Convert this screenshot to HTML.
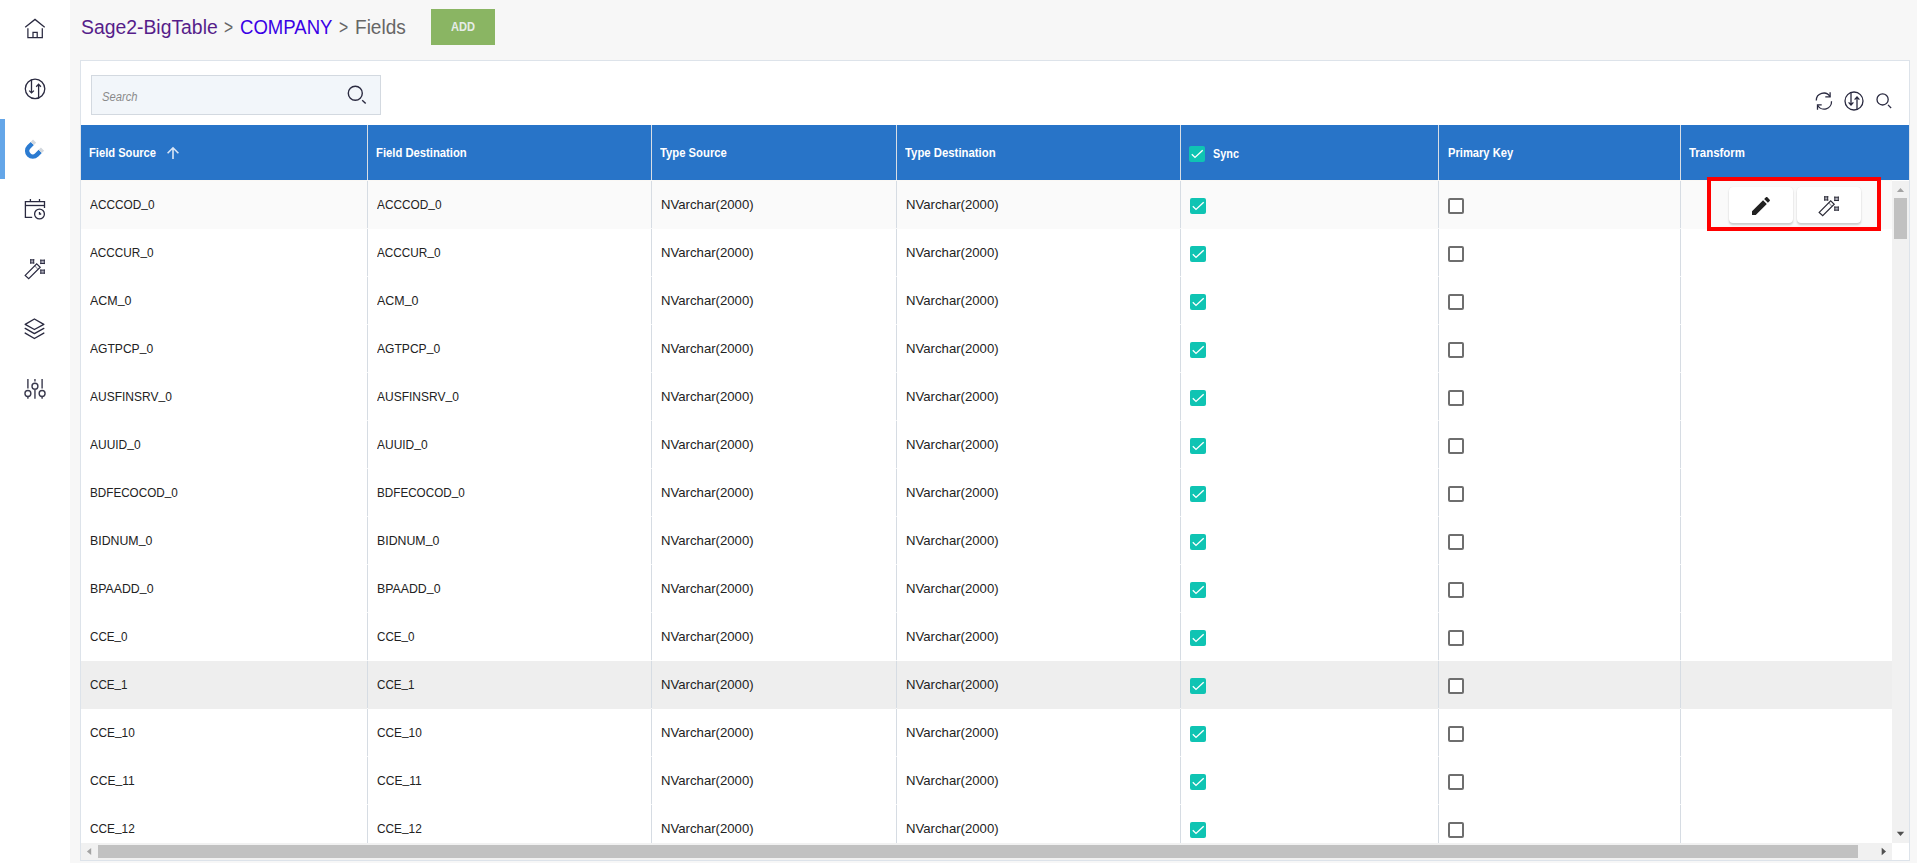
<!DOCTYPE html>
<html><head><meta charset="utf-8"><title>Fields</title>
<style>
*{box-sizing:border-box;margin:0;padding:0}
html,body{width:1917px;height:863px;overflow:hidden;background:#f7f7f7;font-family:"Liberation Sans",sans-serif}
body{position:relative}
.abs{position:absolute}
.t{position:absolute;white-space:nowrap;transform-origin:0 0}
#side{left:0;top:0;width:70px;height:863px;background:#fff}
#active{left:0;top:119px;width:5px;height:60px;background:#64a6e8}
#add{left:431px;top:9px;width:64px;height:36px;background:#8ab563}
#card{left:80px;top:60px;width:1830px;height:801px;background:#fff;border:1px solid #dde3ea}
#search{left:91px;top:75px;width:290px;height:40px;background:#f2f6fa;border:1px solid #d3d9e0}
#thead{left:81px;top:125px;width:1828px;height:55px;background:#2874c8}
.hline{top:125px;width:1px;height:55px;background:#d8dee5}
#hsep{left:81px;top:180px;width:1811px;height:1px;background:#faf8f5}
.bline{top:181px;width:1px;height:662px;background:#d6dce3}
.u{position:relative;top:-2px}
.gap{width:1px;height:1px;background:#f6f7f8}
.row{left:81px;width:1811px;height:48px}
.cbt{position:absolute;width:16px;height:16px;border-radius:2px;background:#0fc4b3}
.cbt svg{display:block}
.cbe{position:absolute;width:16px;height:16px;border-radius:2px;border:2px solid #6e6e6e;background:#fff}
#redbox{left:1707px;top:177px;width:174px;height:54px;border:4px solid #ff0000}
.tbtn{top:187px;width:64px;height:36px;background:#fff;border-radius:4px;box-shadow:0 2px 2px rgba(0,0,0,0.18),0 0 1px rgba(0,0,0,0.1)}
#vsb{left:1892px;top:181px;width:17px;height:662px;background:#f1f1f1}
#hsb{left:81px;top:843px;width:1811px;height:17px;background:#f1f1f1}
#corner{left:1892px;top:843px;width:17px;height:17px;background:#fff}
</style></head><body>
<div class="abs" id="side"></div>
<div class="abs" id="active"></div>
<svg class="abs" style="left:24px;top:18px" width="22" height="22" viewBox="0 0 22 22" fill="none" stroke="#2a2a40" stroke-width="1.25">
<path d="M1.2 9.2 L11 1.4 L20.7 9.2"/><path d="M3.9 10.3 V19.6 H18.3 V10.3"/><path d="M9 19.6 V14.4 H13.2 V19.6"/></svg>
<svg class="abs" style="left:24px;top:78px" width="22" height="22" viewBox="0 0 22 22" fill="none" stroke="#2a2a40" stroke-width="1.3">
<circle cx="11.05" cy="10.85" r="9.75"/><path d="M7.5 1.4 V14.9 M5.2 12.6 L7.5 14.9 L9.9 12.6"/><path d="M14.6 20.5 V6.4 M12.2 8.7 L14.6 6.3 L16.9 8.7"/></svg>
<svg class="abs" style="left:24px;top:138px" width="22" height="22" viewBox="0 0 22 22" fill="none" stroke-width="4.5">
<path d="M8.3 5.48 L4.84 8.94 A5.6 5.6 0 0 0 12.76 16.86 L16.22 13.4" stroke="#2b7bd1"/>
<path d="M8.3 5.48 L10.6 3.18 M16.22 13.4 L18.52 11.1" stroke="#d3d8de"/></svg>
<svg class="abs" style="left:24px;top:198px" width="22" height="22" viewBox="0 0 22 22" fill="none" stroke="#2a2a40" stroke-width="1.3">
<path d="M8.2 19.3 H1.4 V3.6 H20.5 V9.9"/><path d="M1.4 7.5 H20.5"/><path d="M6.4 1.1 V3.6 M15.5 1.1 V3.6"/><circle cx="15.5" cy="16" r="4.9"/><path d="M15.5 14 V16 H17.2"/></svg>
<svg class="abs" style="left:24px;top:258px" width="22" height="22" viewBox="0 0 22 22" fill="none" stroke="#2a2a40" stroke-width="1.2">
<path d="M1.2 17.4 L12.7 5.8 L16.2 9.3 L4.7 20.6 Z"/><path d="M10.9 7.9 L13.6 10.8" stroke-opacity="0.45"/>
<rect x="6.699999999999999" y="1.7999999999999998" width="3.000000000000001" height="3.1999999999999993" fill="#b0b0bc" stroke="none"/><path stroke-width="1" d="M6.699999999999999 1.2 V5.6 M9.700000000000001 1.2 V5.6 M6.1 1.7999999999999998 H10.3 M6.1 5.0 H10.3"/><rect x="16.8" y="2.2" width="3.499999999999999" height="3.3" fill="#b0b0bc" stroke="none"/><path stroke-width="1" d="M16.8 1.6 V6.1 M20.299999999999997 1.6 V6.1 M16.2 2.2 H20.9 M16.2 5.5 H20.9"/><rect x="16.8" y="12.1" width="3.499999999999999" height="3.1000000000000005" fill="#b0b0bc" stroke="none"/><path stroke-width="1" d="M16.8 11.5 V15.8 M20.299999999999997 11.5 V15.8 M16.2 12.1 H20.9 M16.2 15.200000000000001 H20.9"/></svg>
<svg class="abs" style="left:24px;top:318px" width="22" height="22" viewBox="0 0 22 22" fill="none" stroke="#2a2a40" stroke-width="1.4" stroke-linecap="round" stroke-linejoin="round">
<path d="M10.4 1 L19.8 6.4 L10.4 11.5 L1.2 6.4 Z"/><path d="M1.2 10.4 L10.4 15.6 L19.8 10.4"/><path d="M1.2 15.1 L10.4 20.5 L19.8 15.1"/></svg>
<svg class="abs" style="left:24px;top:378px" width="22" height="22" viewBox="0 0 22 22" fill="none" stroke="#3a3a4e" stroke-width="1.4">
<path d="M3.9 1 V10.4 M3.9 18.6 V20.7"/><circle cx="3.9" cy="15.5" r="2.95"/>
<path d="M10.95 1 V3.5 M10.95 11.3 V20.7"/><circle cx="10.95" cy="8.2" r="2.95"/>
<path d="M18.1 1 V10.4 M18.1 18.6 V20.7"/><circle cx="18.1" cy="15.5" r="2.95"/></svg>
<div class="t" style="left:80.70px;top:17.94px;font-size:19.5px;line-height:19.5px;color:#561d8a;transform:scaleX(0.9929);">Sage2-BigTable</div>
<div class="t" style="left:224.00px;top:17.94px;font-size:19.5px;line-height:19.5px;color:#666;transform:scaleX(0.7989);">&gt;</div>
<div class="t" style="left:239.80px;top:17.94px;font-size:19.5px;line-height:19.5px;color:#3a00e6;transform:scaleX(0.9511);">COMPANY</div>
<div class="t" style="left:338.80px;top:17.94px;font-size:19.5px;line-height:19.5px;color:#666;transform:scaleX(0.8077);">&gt;</div>
<div class="t" style="left:354.50px;top:17.94px;font-size:19.5px;line-height:19.5px;color:#666;transform:scaleX(0.9765);">Fields</div>
<div class="abs" id="add"></div>
<div class="t" style="left:451.20px;top:20.30px;font-size:13px;line-height:13px;color:#e6ece8;transform:scaleX(0.8523);font-weight:bold;">ADD</div>
<div class="abs" id="card"></div>
<div class="abs" id="search"></div>
<div class="t" style="left:102.00px;top:91.42px;font-size:12.5px;line-height:12.5px;color:#8a8a8a;transform:scaleX(0.8988);font-style:italic;">Search</div>
<svg class="abs" style="left:344px;top:85px" width="24" height="20" viewBox="0 0 24 20" fill="none" stroke="#2a2a40" stroke-width="1.4"><circle cx="11.3" cy="8.2" r="7"/><path d="M18.2 15.3 L21.7 18.6"/></svg>
<svg class="abs" style="left:1814px;top:91px" width="20" height="20" viewBox="0 0 20 20" fill="none" stroke="#2a2a40" stroke-width="1.3"><path d="M2.3 9.6 A7.4 7.4 0 0 1 16 5.6"/><path d="M16.1 1.2 V5.9 H11.3"/><path d="M17.5 10.2 A7.4 7.4 0 0 1 3.6 14.2"/><path d="M3.5 18.7 V13.8 H7.7"/></svg>
<svg class="abs" style="left:1844px;top:91px" width="20" height="20" viewBox="0 0 20 20" fill="none" stroke="#2a2a40" stroke-width="1.3"><circle cx="10" cy="10" r="9"/><path d="M7 1.4 V14 M4.6 11.4 L7 14 L9.4 11.4"/><path d="M13 18.6 V6 M10.6 8.6 L13 6 L15.4 8.6"/></svg>
<svg class="abs" style="left:1874px;top:91px" width="20" height="20" viewBox="0 0 20 20" fill="none" stroke="#2a2a40" stroke-width="1.3"><circle cx="8.6" cy="8.4" r="5.6"/><path d="M14 13.9 L17.1 17"/></svg>
<div class="abs" id="thead"></div><div class="abs" id="hsep"></div>
<div class="abs hline" style="left:367px"></div>
<div class="abs hline" style="left:651px"></div>
<div class="abs hline" style="left:896px"></div>
<div class="abs hline" style="left:1180px"></div>
<div class="abs hline" style="left:1438px"></div>
<div class="abs hline" style="left:1680px"></div>
<div class="t" style="left:89.10px;top:147.34px;font-size:12px;line-height:12px;color:#fff;transform:scaleX(0.9303);font-weight:bold;">Field Source</div>
<div class="t" style="left:376.30px;top:147.34px;font-size:12px;line-height:12px;color:#fff;transform:scaleX(0.9381);font-weight:bold;">Field Destination</div>
<div class="t" style="left:660.20px;top:147.34px;font-size:12px;line-height:12px;color:#fff;transform:scaleX(0.9391);font-weight:bold;">Type Source</div>
<div class="t" style="left:905.20px;top:147.34px;font-size:12px;line-height:12px;color:#fff;transform:scaleX(0.9458);font-weight:bold;">Type Destination</div>
<div class="t" style="left:1213.10px;top:148.04px;font-size:12px;line-height:12px;color:#fff;transform:scaleX(0.9031);font-weight:bold;">Sync</div>
<div class="t" style="left:1447.50px;top:147.34px;font-size:12px;line-height:12px;color:#fff;transform:scaleX(0.9295);font-weight:bold;">Primary Key</div>
<div class="t" style="left:1689.20px;top:147.34px;font-size:12px;line-height:12px;color:#fff;transform:scaleX(0.9526);font-weight:bold;">Transform</div>
<div class="cbt" style="left:1189px;top:146px"><svg width="16" height="16" viewBox="0 0 16 16"><path d="M2.8 8.3 L6 11.4 L13.7 4.2" fill="none" stroke="#fff" stroke-width="1.4"/></svg></div>
<svg class="abs" style="left:166px;top:146px" width="14" height="14" viewBox="0 0 14 14" fill="none" stroke="#dbe6f5" stroke-width="1.6"><path d="M7 13 V2 M1.6 7.2 L7 1.8 L12.4 7.2"/></svg>
<div class="abs row" style="top:181px;background:#fafafa"></div>
<div class="t" style="left:90.00px;top:198.40px;font-size:13px;line-height:13px;color:#222;transform:scaleX(0.9110);">ACCCOD<span class=u>_</span>0</div>
<div class="t" style="left:377.00px;top:198.40px;font-size:13px;line-height:13px;color:#222;transform:scaleX(0.9110);">ACCCOD<span class=u>_</span>0</div>
<div class="t" style="left:661.00px;top:198.40px;font-size:13px;line-height:13px;color:#222;transform:scaleX(1.0119);">NVarchar(2000)</div>
<div class="t" style="left:906.00px;top:198.40px;font-size:13px;line-height:13px;color:#222;transform:scaleX(1.0119);">NVarchar(2000)</div>
<div class="cbt" style="left:1190px;top:198px"><svg width="16" height="16" viewBox="0 0 16 16"><path d="M2.8 8.3 L6 11.4 L13.7 4.2" fill="none" stroke="#fff" stroke-width="1.4"/></svg></div>
<div class="cbe" style="left:1448px;top:198px"></div>
<div class="abs row" style="top:229px;background:#fff"></div>
<div class="t" style="left:90.00px;top:246.40px;font-size:13px;line-height:13px;color:#222;transform:scaleX(0.9057);">ACCCUR<span class=u>_</span>0</div>
<div class="t" style="left:377.00px;top:246.40px;font-size:13px;line-height:13px;color:#222;transform:scaleX(0.9057);">ACCCUR<span class=u>_</span>0</div>
<div class="t" style="left:661.00px;top:246.40px;font-size:13px;line-height:13px;color:#222;transform:scaleX(1.0119);">NVarchar(2000)</div>
<div class="t" style="left:906.00px;top:246.40px;font-size:13px;line-height:13px;color:#222;transform:scaleX(1.0119);">NVarchar(2000)</div>
<div class="cbt" style="left:1190px;top:246px"><svg width="16" height="16" viewBox="0 0 16 16"><path d="M2.8 8.3 L6 11.4 L13.7 4.2" fill="none" stroke="#fff" stroke-width="1.4"/></svg></div>
<div class="cbe" style="left:1448px;top:246px"></div>
<div class="abs row" style="top:277px;background:#fff"></div>
<div class="t" style="left:90.00px;top:294.40px;font-size:13px;line-height:13px;color:#222;transform:scaleX(0.9564);">ACM<span class=u>_</span>0</div>
<div class="t" style="left:377.00px;top:294.40px;font-size:13px;line-height:13px;color:#222;transform:scaleX(0.9564);">ACM<span class=u>_</span>0</div>
<div class="t" style="left:661.00px;top:294.40px;font-size:13px;line-height:13px;color:#222;transform:scaleX(1.0119);">NVarchar(2000)</div>
<div class="t" style="left:906.00px;top:294.40px;font-size:13px;line-height:13px;color:#222;transform:scaleX(1.0119);">NVarchar(2000)</div>
<div class="cbt" style="left:1190px;top:294px"><svg width="16" height="16" viewBox="0 0 16 16"><path d="M2.8 8.3 L6 11.4 L13.7 4.2" fill="none" stroke="#fff" stroke-width="1.4"/></svg></div>
<div class="cbe" style="left:1448px;top:294px"></div>
<div class="abs row" style="top:325px;background:#fff"></div>
<div class="t" style="left:90.00px;top:342.40px;font-size:13px;line-height:13px;color:#222;transform:scaleX(0.9294);">AGTPCP<span class=u>_</span>0</div>
<div class="t" style="left:377.00px;top:342.40px;font-size:13px;line-height:13px;color:#222;transform:scaleX(0.9294);">AGTPCP<span class=u>_</span>0</div>
<div class="t" style="left:661.00px;top:342.40px;font-size:13px;line-height:13px;color:#222;transform:scaleX(1.0119);">NVarchar(2000)</div>
<div class="t" style="left:906.00px;top:342.40px;font-size:13px;line-height:13px;color:#222;transform:scaleX(1.0119);">NVarchar(2000)</div>
<div class="cbt" style="left:1190px;top:342px"><svg width="16" height="16" viewBox="0 0 16 16"><path d="M2.8 8.3 L6 11.4 L13.7 4.2" fill="none" stroke="#fff" stroke-width="1.4"/></svg></div>
<div class="cbe" style="left:1448px;top:342px"></div>
<div class="abs row" style="top:373px;background:#fff"></div>
<div class="t" style="left:90.00px;top:390.40px;font-size:13px;line-height:13px;color:#222;transform:scaleX(0.9229);">AUSFINSRV<span class=u>_</span>0</div>
<div class="t" style="left:377.00px;top:390.40px;font-size:13px;line-height:13px;color:#222;transform:scaleX(0.9229);">AUSFINSRV<span class=u>_</span>0</div>
<div class="t" style="left:661.00px;top:390.40px;font-size:13px;line-height:13px;color:#222;transform:scaleX(1.0119);">NVarchar(2000)</div>
<div class="t" style="left:906.00px;top:390.40px;font-size:13px;line-height:13px;color:#222;transform:scaleX(1.0119);">NVarchar(2000)</div>
<div class="cbt" style="left:1190px;top:390px"><svg width="16" height="16" viewBox="0 0 16 16"><path d="M2.8 8.3 L6 11.4 L13.7 4.2" fill="none" stroke="#fff" stroke-width="1.4"/></svg></div>
<div class="cbe" style="left:1448px;top:390px"></div>
<div class="abs row" style="top:421px;background:#fff"></div>
<div class="t" style="left:90.00px;top:438.40px;font-size:13px;line-height:13px;color:#222;transform:scaleX(0.9209);">AUUID<span class=u>_</span>0</div>
<div class="t" style="left:377.00px;top:438.40px;font-size:13px;line-height:13px;color:#222;transform:scaleX(0.9209);">AUUID<span class=u>_</span>0</div>
<div class="t" style="left:661.00px;top:438.40px;font-size:13px;line-height:13px;color:#222;transform:scaleX(1.0119);">NVarchar(2000)</div>
<div class="t" style="left:906.00px;top:438.40px;font-size:13px;line-height:13px;color:#222;transform:scaleX(1.0119);">NVarchar(2000)</div>
<div class="cbt" style="left:1190px;top:438px"><svg width="16" height="16" viewBox="0 0 16 16"><path d="M2.8 8.3 L6 11.4 L13.7 4.2" fill="none" stroke="#fff" stroke-width="1.4"/></svg></div>
<div class="cbe" style="left:1448px;top:438px"></div>
<div class="abs row" style="top:469px;background:#fff"></div>
<div class="t" style="left:90.00px;top:486.40px;font-size:13px;line-height:13px;color:#222;transform:scaleX(0.8991);">BDFECOCOD<span class=u>_</span>0</div>
<div class="t" style="left:377.00px;top:486.40px;font-size:13px;line-height:13px;color:#222;transform:scaleX(0.8991);">BDFECOCOD<span class=u>_</span>0</div>
<div class="t" style="left:661.00px;top:486.40px;font-size:13px;line-height:13px;color:#222;transform:scaleX(1.0119);">NVarchar(2000)</div>
<div class="t" style="left:906.00px;top:486.40px;font-size:13px;line-height:13px;color:#222;transform:scaleX(1.0119);">NVarchar(2000)</div>
<div class="cbt" style="left:1190px;top:486px"><svg width="16" height="16" viewBox="0 0 16 16"><path d="M2.8 8.3 L6 11.4 L13.7 4.2" fill="none" stroke="#fff" stroke-width="1.4"/></svg></div>
<div class="cbe" style="left:1448px;top:486px"></div>
<div class="abs row" style="top:517px;background:#fff"></div>
<div class="t" style="left:90.00px;top:534.40px;font-size:13px;line-height:13px;color:#222;transform:scaleX(0.9487);">BIDNUM<span class=u>_</span>0</div>
<div class="t" style="left:377.00px;top:534.40px;font-size:13px;line-height:13px;color:#222;transform:scaleX(0.9487);">BIDNUM<span class=u>_</span>0</div>
<div class="t" style="left:661.00px;top:534.40px;font-size:13px;line-height:13px;color:#222;transform:scaleX(1.0119);">NVarchar(2000)</div>
<div class="t" style="left:906.00px;top:534.40px;font-size:13px;line-height:13px;color:#222;transform:scaleX(1.0119);">NVarchar(2000)</div>
<div class="cbt" style="left:1190px;top:534px"><svg width="16" height="16" viewBox="0 0 16 16"><path d="M2.8 8.3 L6 11.4 L13.7 4.2" fill="none" stroke="#fff" stroke-width="1.4"/></svg></div>
<div class="cbe" style="left:1448px;top:534px"></div>
<div class="abs row" style="top:565px;background:#fff"></div>
<div class="t" style="left:90.00px;top:582.40px;font-size:13px;line-height:13px;color:#222;transform:scaleX(0.9480);">BPAADD<span class=u>_</span>0</div>
<div class="t" style="left:377.00px;top:582.40px;font-size:13px;line-height:13px;color:#222;transform:scaleX(0.9480);">BPAADD<span class=u>_</span>0</div>
<div class="t" style="left:661.00px;top:582.40px;font-size:13px;line-height:13px;color:#222;transform:scaleX(1.0119);">NVarchar(2000)</div>
<div class="t" style="left:906.00px;top:582.40px;font-size:13px;line-height:13px;color:#222;transform:scaleX(1.0119);">NVarchar(2000)</div>
<div class="cbt" style="left:1190px;top:582px"><svg width="16" height="16" viewBox="0 0 16 16"><path d="M2.8 8.3 L6 11.4 L13.7 4.2" fill="none" stroke="#fff" stroke-width="1.4"/></svg></div>
<div class="cbe" style="left:1448px;top:582px"></div>
<div class="abs row" style="top:613px;background:#fff"></div>
<div class="t" style="left:90.00px;top:630.40px;font-size:13px;line-height:13px;color:#222;transform:scaleX(0.8943);">CCE<span class=u>_</span>0</div>
<div class="t" style="left:377.00px;top:630.40px;font-size:13px;line-height:13px;color:#222;transform:scaleX(0.8943);">CCE<span class=u>_</span>0</div>
<div class="t" style="left:661.00px;top:630.40px;font-size:13px;line-height:13px;color:#222;transform:scaleX(1.0119);">NVarchar(2000)</div>
<div class="t" style="left:906.00px;top:630.40px;font-size:13px;line-height:13px;color:#222;transform:scaleX(1.0119);">NVarchar(2000)</div>
<div class="cbt" style="left:1190px;top:630px"><svg width="16" height="16" viewBox="0 0 16 16"><path d="M2.8 8.3 L6 11.4 L13.7 4.2" fill="none" stroke="#fff" stroke-width="1.4"/></svg></div>
<div class="cbe" style="left:1448px;top:630px"></div>
<div class="abs row" style="top:661px;background:#eeeeee"></div>
<div class="t" style="left:90.00px;top:678.40px;font-size:13px;line-height:13px;color:#222;transform:scaleX(0.8943);">CCE<span class=u>_</span>1</div>
<div class="t" style="left:377.00px;top:678.40px;font-size:13px;line-height:13px;color:#222;transform:scaleX(0.8943);">CCE<span class=u>_</span>1</div>
<div class="t" style="left:661.00px;top:678.40px;font-size:13px;line-height:13px;color:#222;transform:scaleX(1.0119);">NVarchar(2000)</div>
<div class="t" style="left:906.00px;top:678.40px;font-size:13px;line-height:13px;color:#222;transform:scaleX(1.0119);">NVarchar(2000)</div>
<div class="cbt" style="left:1190px;top:678px"><svg width="16" height="16" viewBox="0 0 16 16"><path d="M2.8 8.3 L6 11.4 L13.7 4.2" fill="none" stroke="#fff" stroke-width="1.4"/></svg></div>
<div class="cbe" style="left:1448px;top:678px"></div>
<div class="abs row" style="top:709px;background:#fff"></div>
<div class="t" style="left:90.00px;top:726.40px;font-size:13px;line-height:13px;color:#222;transform:scaleX(0.9113);">CCE<span class=u>_</span>10</div>
<div class="t" style="left:377.00px;top:726.40px;font-size:13px;line-height:13px;color:#222;transform:scaleX(0.9113);">CCE<span class=u>_</span>10</div>
<div class="t" style="left:661.00px;top:726.40px;font-size:13px;line-height:13px;color:#222;transform:scaleX(1.0119);">NVarchar(2000)</div>
<div class="t" style="left:906.00px;top:726.40px;font-size:13px;line-height:13px;color:#222;transform:scaleX(1.0119);">NVarchar(2000)</div>
<div class="cbt" style="left:1190px;top:726px"><svg width="16" height="16" viewBox="0 0 16 16"><path d="M2.8 8.3 L6 11.4 L13.7 4.2" fill="none" stroke="#fff" stroke-width="1.4"/></svg></div>
<div class="cbe" style="left:1448px;top:726px"></div>
<div class="abs row" style="top:757px;background:#fff"></div>
<div class="t" style="left:90.00px;top:774.40px;font-size:13px;line-height:13px;color:#222;transform:scaleX(0.9295);">CCE<span class=u>_</span>11</div>
<div class="t" style="left:377.00px;top:774.40px;font-size:13px;line-height:13px;color:#222;transform:scaleX(0.9295);">CCE<span class=u>_</span>11</div>
<div class="t" style="left:661.00px;top:774.40px;font-size:13px;line-height:13px;color:#222;transform:scaleX(1.0119);">NVarchar(2000)</div>
<div class="t" style="left:906.00px;top:774.40px;font-size:13px;line-height:13px;color:#222;transform:scaleX(1.0119);">NVarchar(2000)</div>
<div class="cbt" style="left:1190px;top:774px"><svg width="16" height="16" viewBox="0 0 16 16"><path d="M2.8 8.3 L6 11.4 L13.7 4.2" fill="none" stroke="#fff" stroke-width="1.4"/></svg></div>
<div class="cbe" style="left:1448px;top:774px"></div>
<div class="abs row" style="top:805px;background:#fff"></div>
<div class="t" style="left:90.00px;top:822.40px;font-size:13px;line-height:13px;color:#222;transform:scaleX(0.9113);">CCE<span class=u>_</span>12</div>
<div class="t" style="left:377.00px;top:822.40px;font-size:13px;line-height:13px;color:#222;transform:scaleX(0.9113);">CCE<span class=u>_</span>12</div>
<div class="t" style="left:661.00px;top:822.40px;font-size:13px;line-height:13px;color:#222;transform:scaleX(1.0119);">NVarchar(2000)</div>
<div class="t" style="left:906.00px;top:822.40px;font-size:13px;line-height:13px;color:#222;transform:scaleX(1.0119);">NVarchar(2000)</div>
<div class="cbt" style="left:1190px;top:822px"><svg width="16" height="16" viewBox="0 0 16 16"><path d="M2.8 8.3 L6 11.4 L13.7 4.2" fill="none" stroke="#fff" stroke-width="1.4"/></svg></div>
<div class="cbe" style="left:1448px;top:822px"></div>
<div class="abs bline" style="left:367px"></div>
<div class="abs gap" style="left:367px;top:228px"></div>
<div class="abs gap" style="left:367px;top:276px"></div>
<div class="abs gap" style="left:367px;top:324px"></div>
<div class="abs gap" style="left:367px;top:372px"></div>
<div class="abs gap" style="left:367px;top:420px"></div>
<div class="abs gap" style="left:367px;top:468px"></div>
<div class="abs gap" style="left:367px;top:516px"></div>
<div class="abs gap" style="left:367px;top:564px"></div>
<div class="abs gap" style="left:367px;top:612px"></div>
<div class="abs gap" style="left:367px;top:660px"></div>
<div class="abs gap" style="left:367px;top:708px"></div>
<div class="abs gap" style="left:367px;top:756px"></div>
<div class="abs gap" style="left:367px;top:804px"></div>
<div class="abs bline" style="left:651px"></div>
<div class="abs gap" style="left:651px;top:228px"></div>
<div class="abs gap" style="left:651px;top:276px"></div>
<div class="abs gap" style="left:651px;top:324px"></div>
<div class="abs gap" style="left:651px;top:372px"></div>
<div class="abs gap" style="left:651px;top:420px"></div>
<div class="abs gap" style="left:651px;top:468px"></div>
<div class="abs gap" style="left:651px;top:516px"></div>
<div class="abs gap" style="left:651px;top:564px"></div>
<div class="abs gap" style="left:651px;top:612px"></div>
<div class="abs gap" style="left:651px;top:660px"></div>
<div class="abs gap" style="left:651px;top:708px"></div>
<div class="abs gap" style="left:651px;top:756px"></div>
<div class="abs gap" style="left:651px;top:804px"></div>
<div class="abs bline" style="left:896px"></div>
<div class="abs gap" style="left:896px;top:228px"></div>
<div class="abs gap" style="left:896px;top:276px"></div>
<div class="abs gap" style="left:896px;top:324px"></div>
<div class="abs gap" style="left:896px;top:372px"></div>
<div class="abs gap" style="left:896px;top:420px"></div>
<div class="abs gap" style="left:896px;top:468px"></div>
<div class="abs gap" style="left:896px;top:516px"></div>
<div class="abs gap" style="left:896px;top:564px"></div>
<div class="abs gap" style="left:896px;top:612px"></div>
<div class="abs gap" style="left:896px;top:660px"></div>
<div class="abs gap" style="left:896px;top:708px"></div>
<div class="abs gap" style="left:896px;top:756px"></div>
<div class="abs gap" style="left:896px;top:804px"></div>
<div class="abs bline" style="left:1180px"></div>
<div class="abs gap" style="left:1180px;top:228px"></div>
<div class="abs gap" style="left:1180px;top:276px"></div>
<div class="abs gap" style="left:1180px;top:324px"></div>
<div class="abs gap" style="left:1180px;top:372px"></div>
<div class="abs gap" style="left:1180px;top:420px"></div>
<div class="abs gap" style="left:1180px;top:468px"></div>
<div class="abs gap" style="left:1180px;top:516px"></div>
<div class="abs gap" style="left:1180px;top:564px"></div>
<div class="abs gap" style="left:1180px;top:612px"></div>
<div class="abs gap" style="left:1180px;top:660px"></div>
<div class="abs gap" style="left:1180px;top:708px"></div>
<div class="abs gap" style="left:1180px;top:756px"></div>
<div class="abs gap" style="left:1180px;top:804px"></div>
<div class="abs bline" style="left:1438px"></div>
<div class="abs gap" style="left:1438px;top:228px"></div>
<div class="abs gap" style="left:1438px;top:276px"></div>
<div class="abs gap" style="left:1438px;top:324px"></div>
<div class="abs gap" style="left:1438px;top:372px"></div>
<div class="abs gap" style="left:1438px;top:420px"></div>
<div class="abs gap" style="left:1438px;top:468px"></div>
<div class="abs gap" style="left:1438px;top:516px"></div>
<div class="abs gap" style="left:1438px;top:564px"></div>
<div class="abs gap" style="left:1438px;top:612px"></div>
<div class="abs gap" style="left:1438px;top:660px"></div>
<div class="abs gap" style="left:1438px;top:708px"></div>
<div class="abs gap" style="left:1438px;top:756px"></div>
<div class="abs gap" style="left:1438px;top:804px"></div>
<div class="abs bline" style="left:1680px"></div>
<div class="abs gap" style="left:1680px;top:228px"></div>
<div class="abs gap" style="left:1680px;top:276px"></div>
<div class="abs gap" style="left:1680px;top:324px"></div>
<div class="abs gap" style="left:1680px;top:372px"></div>
<div class="abs gap" style="left:1680px;top:420px"></div>
<div class="abs gap" style="left:1680px;top:468px"></div>
<div class="abs gap" style="left:1680px;top:516px"></div>
<div class="abs gap" style="left:1680px;top:564px"></div>
<div class="abs gap" style="left:1680px;top:612px"></div>
<div class="abs gap" style="left:1680px;top:660px"></div>
<div class="abs gap" style="left:1680px;top:708px"></div>
<div class="abs gap" style="left:1680px;top:756px"></div>
<div class="abs gap" style="left:1680px;top:804px"></div>
<div class="abs" id="vsb"></div>
<div class="abs" id="hsb"></div>
<div class="abs" id="corner"></div>
<div class="abs" id="redbox"></div>
<div class="abs tbtn" style="left:1729px"></div>
<div class="abs tbtn" style="left:1797px"></div>
<svg class="abs" style="left:1749px;top:194.2px" width="24" height="24" viewBox="0 0 24 24"><path fill="#212121" d="M3 17.25V21h3.75L17.81 9.94l-3.75-3.75L3 17.25zM20.71 7.04c.39-.39.39-1.02 0-1.41l-2.34-2.34c-.39-.39-1.02-.39-1.41 0l-1.83 1.83 3.75 3.75 1.83-1.83z"/></svg>
<svg class="abs" style="left:1817.7px;top:194.6px" width="22" height="22" viewBox="0 0 22 22" fill="none" stroke="#2a2a36" stroke-width="1.2">
<path d="M1.2 17.4 L12.7 5.8 L16.2 9.3 L4.7 20.6 Z"/><path d="M10.9 7.9 L13.6 10.8" stroke-opacity="0.45"/>
<rect x="6.699999999999999" y="1.7999999999999998" width="3.000000000000001" height="3.1999999999999993" fill="#b0b0bc" stroke="none"/><path stroke-width="1" d="M6.699999999999999 1.2 V5.6 M9.700000000000001 1.2 V5.6 M6.1 1.7999999999999998 H10.3 M6.1 5.0 H10.3"/><rect x="16.8" y="2.2" width="3.499999999999999" height="3.3" fill="#b0b0bc" stroke="none"/><path stroke-width="1" d="M16.8 1.6 V6.1 M20.299999999999997 1.6 V6.1 M16.2 2.2 H20.9 M16.2 5.5 H20.9"/><rect x="16.8" y="12.1" width="3.499999999999999" height="3.1000000000000005" fill="#b0b0bc" stroke="none"/><path stroke-width="1" d="M16.8 11.5 V15.8 M20.299999999999997 11.5 V15.8 M16.2 12.1 H20.9 M16.2 15.200000000000001 H20.9"/></svg>
<div class="abs" style="left:1894px;top:198px;width:13px;height:41px;background:#c1c1c1"></div>
<div class="abs" style="left:98px;top:845px;width:1760px;height:13px;background:#c1c1c1"></div>
<svg class="abs" style="left:1892px;top:181px" width="17" height="662" viewBox="0 0 17 662"><path d="M4.9 11 L8.5 7 L12.1 11 Z" fill="#a3a3a3"/><path d="M4.8 650.8 L8.5 655 L12.2 650.8 Z" fill="#505050"/></svg>
<svg class="abs" style="left:81px;top:843px" width="1811" height="17" viewBox="0 0 1811 17"><path d="M10.2 4.9 L5.9 8.5 L10.2 12.1 Z" fill="#a3a3a3"/><path d="M800.7 4.8 L805 8.5 L800.7 12.2 Z" transform="translate(1000 0)" fill="#505050"/></svg>
</body></html>
